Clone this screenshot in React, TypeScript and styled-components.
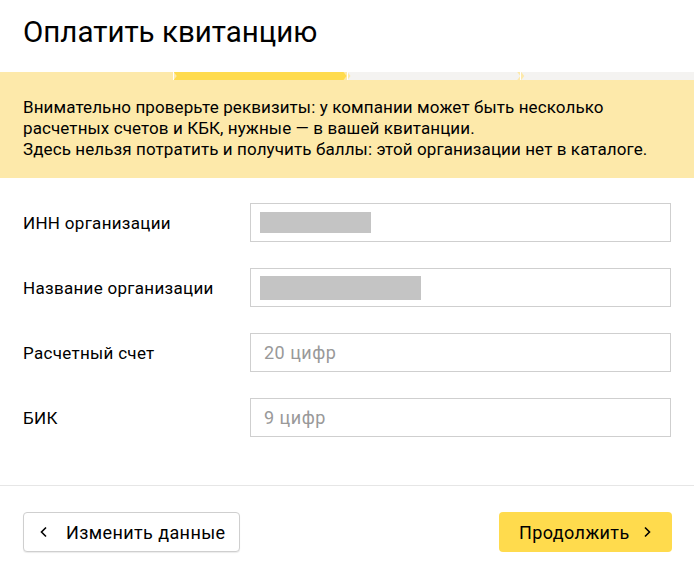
import React from 'react'
import styled, { createGlobalStyle } from 'styled-components'

const GlobalStyle = createGlobalStyle`
  html, body {
    margin: 0;
    padding: 0;
    background: #fff;
  }
  body {
    font-family: Roboto, "Liberation Sans", Arial, sans-serif;
    color: #000;
  }
`

const Page = styled.div`
  width: 694px;
  height: 574px;
  display: flex;
  flex-direction: column;
  background: #fff;
`

const Header = styled.div`
  height: 72px;
  display: flex;
  align-items: center;
  padding: 0 23px 8px;
  box-sizing: border-box;
`

const Title = styled.h1`
  margin: 0;
  font-size: 29.5px;
  font-weight: 400;
  letter-spacing: 0;
`

const Progress = styled.div`
  height: 8px;
  display: flex;
  background: #fde9aa;
`

interface StepProps {
  state: 'done' | 'active' | 'todo'
}
const Step = styled.div<StepProps>`
  flex: 1;
  background: ${(p) =>
    p.state === 'done' ? '#fde9aa' : p.state === 'active' ? '#ffdb4d' : '#f4f3f1'};
  clip-path: polygon(0 0, calc(100% - 3px) 0, 100% 50%, calc(100% - 3px) 100%, 0 100%, 3px 50%);
  &:first-child {
    clip-path: polygon(0 0, calc(100% - 3px) 0, 100% 50%, calc(100% - 3px) 100%, 0 100%);
  }
  &:last-child {
    clip-path: polygon(0 0, 100% 0, 100% 100%, 0 100%, 3px 50%);
  }
`

const StepGap = styled.div`
  width: 1px;
  background: #fff;
`

const Notice = styled.div`
  background: #fde9aa;
  padding: 17px 23px 18px;
  font-size: 17px;
  line-height: 21px;
  letter-spacing: 0.1px;
`

const NoticeLine = styled.div`
  white-space: nowrap;
`

const Form = styled.div`
  display: flex;
  flex-direction: column;
  gap: 26px;
  padding: 25px 23px 48px;
`

const Row = styled.div`
  display: flex;
  align-items: center;
`

const Label = styled.div`
  width: 227px;
  font-size: 17px;
  letter-spacing: 0.3px;
`

const Field = styled.div`
  flex: 1;
  height: 39px;
  box-sizing: border-box;
  border: 1px solid #cfcfcf;
  display: flex;
  align-items: center;
  padding: 0 13px;
  font-size: 18px;
  color: #999;
  letter-spacing: 0.5px;
`

interface MaskProps {
  w: number
  h: number
}
const Mask = styled.div<MaskProps>`
  width: ${(p) => p.w}px;
  height: ${(p) => p.h}px;
  background: #c4c4c4;
  margin-left: -4px;
`

const Divider = styled.div`
  height: 1px;
  background: #e6e6e6;
`

const Footer = styled.div`
  display: flex;
  justify-content: space-between;
  padding: 26px 22px 0 23px;
`

interface ButtonProps {
  primary?: boolean
}
const Button = styled.button<ButtonProps>`
  height: 40px;
  box-sizing: border-box;
  display: flex;
  align-items: center;
  white-space: nowrap;
  border-radius: 4px;
  font-family: inherit;
  font-size: 18px;
  color: #000;
  letter-spacing: 0.4px;
  cursor: pointer;
  border: ${(p) => (p.primary ? 'none' : '1px solid #cfcfcf')};
  background: ${(p) => (p.primary ? '#ffdb4d' : '#fff')};
  box-shadow: ${(p) => (p.primary ? 'none' : '0 1px 1px rgba(0,0,0,0.08)')};
  padding: ${(p) => (p.primary ? '0 0 0 20px' : '0 0 0 14px')};
  width: ${(p) => (p.primary ? '173px' : '217px')};
  gap: ${(p) => (p.primary ? '11px' : '16px')};
`

const Chevron = ({ dir }: { dir: 'left' | 'right' }) => (
  <svg width="12" height="14" viewBox="0 0 12 14" fill="none">
    <path
      d={dir === 'left' ? 'M8 2.5 L3.5 7 L8 11.5' : 'M4 2.5 L8.5 7 L4 11.5'}
      stroke="#000"
      strokeWidth="1.6"
    />
  </svg>
)

export default function App() {
  return (
    <Page>
      <GlobalStyle />
      <Header>
        <Title>Оплатить квитанцию</Title>
      </Header>
      <Progress>
        <Step state="done" />
        <StepGap />
        <Step state="active" />
        <StepGap />
        <Step state="todo" />
        <StepGap />
        <Step state="todo" />
      </Progress>
      <Notice>
        <NoticeLine>Внимательно проверьте реквизиты: у компании может быть несколько</NoticeLine>
        <NoticeLine>расчетных счетов и КБК, нужные — в вашей квитанции.</NoticeLine>
        <NoticeLine>Здесь нельзя потратить и получить баллы: этой организации нет в каталоге.</NoticeLine>
      </Notice>
      <Form>
        <Row>
          <Label>ИНН организации</Label>
          <Field>
            <Mask w={111} h={21} />
          </Field>
        </Row>
        <Row>
          <Label>Название организации</Label>
          <Field>
            <Mask w={161} h={24} />
          </Field>
        </Row>
        <Row>
          <Label>Расчетный счет</Label>
          <Field>20 цифр</Field>
        </Row>
        <Row>
          <Label>БИК</Label>
          <Field>9 цифр</Field>
        </Row>
      </Form>
      <Divider />
      <Footer>
        <Button>
          <Chevron dir="left" />
          Изменить данные
        </Button>
        <Button primary>
          Продолжить
          <Chevron dir="right" />
        </Button>
      </Footer>
    </Page>
  )
}
